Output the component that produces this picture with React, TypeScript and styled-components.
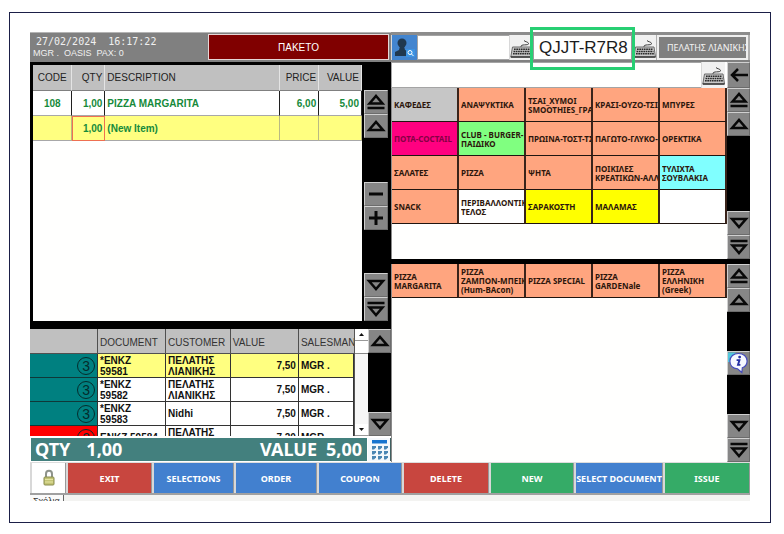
import React from "react";
import styled, { createGlobalStyle, css } from "styled-components";

const GlobalStyle = createGlobalStyle`
  *, *::before, *::after { box-sizing: border-box; }
  body { margin: 0; background: #ffffff; font-family: "Liberation Sans", Arial, sans-serif; }
  button, input { font: inherit; color: inherit; margin: 0; padding: 0; border: 0; border-radius: 0; }
  button { cursor: pointer; }
  table { border-collapse: separate; border-spacing: 0; table-layout: fixed; width: 100%; }
  th { font-weight: 400; }
`;

const uiFont = css`font-family: "Noto Sans", Tahoma, sans-serif;`;

const Page = styled.div`
  padding: 12px 13px 12px 9px;
`;

const Frame = styled.div`
  border: 1px solid #1b1f47;
  padding: 19px 20px 21px;
`;

const Terminal = styled.main`
  width: 100%;
`;

const Columns = styled.div`
  display: grid;
  grid-template-columns: minmax(0, 361fr) minmax(0, 359fr);
  height: 430px;
`;

const Column = styled.section`
  display: flex;
  flex-direction: column;
  min-width: 0;
`;

const StatusBar = styled.header`
  display: grid;
  grid-template-columns: minmax(0, 175fr) minmax(0, 181fr);
  height: 30px;
  background: #808080;
  border-top: 1px solid #b4b4b4;
  padding: 1px 2px 2px 3px;
`;

const Session = styled.div`
  display: flex;
  flex-direction: column;
  color: #f0f0f0;
  padding-top: 2px;
  white-space: pre;
`;

const Clock = styled.time`
  font: 10px/12px "DejaVu Sans Mono", monospace;
  padding-left: 3px;
`;

const Operator = styled.span`
  font-size: 9px;
  line-height: 10px;
`;

const OrderType = styled.button`
  background: #800000;
  border: 1px solid #e6d6d6;
  color: #ffffff;
  font-size: 10px;
`;

const OrderPanel = styled.div`
  display: grid;
  grid-template-columns: minmax(0, 1fr) 24px;
  column-gap: 2px;
  height: 267px;
  background: #000000;
  padding: 3px 3px 8px;
`;

const TableWell = styled.div`
  background: #fffffe;
  overflow: hidden;
`;

const OrderHead = styled.th<{ $align?: string }>`
  height: 26px;
  padding: 0 2px;
  background: #c0c0c0;
  border-right: 1px solid #e4e4e4;
  border-bottom: 1px solid #808080;
  color: #222222;
  font-size: 10px;
  text-align: ${(p) => p.$align || "left"};
  white-space: nowrap;
`;

const OrderCell = styled.td<{ $align?: string; $current?: boolean; $focus?: boolean }>`
  height: 25px;
  padding: 0 2px;
  color: #168a3b;
  font-size: 10px;
  font-weight: 700;
  text-align: ${(p) => p.$align || "left"};
  white-space: nowrap;
  background: ${(p) => (p.$current ? "#ffff80" : "#ffffff")};
  border-right: 1px solid ${(p) => (p.$current ? "#b9b983" : "#202020")};
  border-bottom: 1px solid #a8a8a8;
  ${(p) => p.$focus && css`border: 1px solid #ee7052;`}
`;

const Rail = styled.nav<{ $push?: number }>`
  display: flex;
  flex-direction: column;
  background: #000000;
  padding-top: ${(p) => p.$push || 0}px;
`;

const Spacer = styled.div`
  flex: 1;
`;

const RailButton = styled.button<{ $tall?: boolean }>`
  display: flex;
  align-items: center;
  justify-content: center;
  height: ${(p) => (p.$tall ? 26 : 24)}px;
  flex: none;
  background: #868686;
  border: 1px solid #6c6c6c;
  border-top-color: #d0d0d0;
  border-left-color: #d0d0d0;
`;

const Documents = styled.div`
  display: grid;
  grid-template-columns: minmax(0, 1fr) 14px 23px;
  height: 107px;
  overflow: hidden;
`;

const DocViewport = styled.div`
  height: 107px;
  overflow: hidden;
  background: #ffffff;
`;

const DocHead = styled.th`
  height: 25px;
  padding: 2px 0 0 2px;
  background: #c0c0c0;
  border-right: 1px solid #505050;
  border-bottom: 1px solid #505050;
  color: #333333;
  font-size: 10px;
  text-align: left;
  white-space: nowrap;
  overflow: hidden;
  &:last-child { border-right: 0; }
`;

const DocCell = styled.td<{ $current?: boolean; $right?: boolean }>`
  height: 24px;
  padding: 0 2px;
  background: ${(p) => (p.$current ? "#ffff80" : "#ffffff")};
  border-right: 1px solid #333333;
  border-bottom: 1px solid #333333;
  color: #111111;
  font-size: 10px;
  font-weight: 700;
  line-height: 11px;
  white-space: pre-line;
  text-align: ${(p) => (p.$right ? "right" : "left")};
`;

const StateCell = styled.td<{ $alert?: boolean }>`
  height: 24px;
  padding: 0 2px 0 0;
  background: ${(p) => (p.$alert ? "#ff0000" : "#008080")};
  border-right: 1px solid #333333;
  border-bottom: 1px solid #0f3838;
`;

const Ring = styled.span`
  display: flex;
  align-items: center;
  justify-content: center;
  width: 18px;
  height: 18px;
  margin-left: auto;
  border: 1px solid #052c2c;
  border-radius: 50%;
  color: #052c2c;
  font-size: 14px;
  line-height: 16px;
`;

const ScrollTrack = styled.div`
  display: flex;
  flex-direction: column;
  background: #f7f7f7;
  border-left: 1px solid #555555;
`;

const ScrollButton = styled.button`
  display: flex;
  align-items: center;
  justify-content: center;
  height: 12px;
  background: #ffffff;
  border-bottom: 1px solid #999999;
`;

const ScrollThumb = styled.div`
  height: 13px;
  background: #ffffff;
  border-bottom: 1px solid #888888;
`;

const Totals = styled.div`
  display: grid;
  grid-template-columns: minmax(0, 1fr) 23px;
  column-gap: 1px;
  height: 26px;
  padding: 2px 0 1px 1px;
  background: #ffffff;
`;

const TotalBar = styled.div`
  ${uiFont}
  display: flex;
  justify-content: space-between;
  align-items: center;
  padding: 0 5px 0 4px;
  background: #43807e;
  color: #ffffff;
  font-size: 18px;
  font-weight: 700;
  line-height: 23px;
`;

const TotalPair = styled.div<{ $gap: number }>`
  display: flex;
  gap: ${(p) => p.$gap}px;
`;

const CalcButton = styled.button`
  display: flex;
  align-items: center;
  justify-content: center;
  background: #f4f8fc;
  border-right: 1px solid #406060;
`;

const CustomerBar = styled.header`
  display: flex;
  height: 30px;
  background: #b0b0b0;
  border-top: 3px solid #8c8c8c;
  border-bottom: 2px solid #808080;
  padding: 0 2px 0 0;
`;

const IconButton = styled.button<{ $blue?: boolean }>`
  display: flex;
  align-items: center;
  justify-content: center;
  flex: none;
  width: ${(p) => (p.$blue ? 26 : 24)}px;
  background: ${(p) => (p.$blue ? "#4385cf" : "#f1f1f1")};
  border-left: 1px solid #d8d8d8;
`;

const TextField = styled.input`
  flex: 1;
  min-width: 0;
  width: 100%;
  background: #fffffe;
  border: 1px solid #a4a4a4;
  border-right: 0;
  outline: none;
  padding: 0 4px;
  font-size: 10px;
`;

const CodeHolder = styled.div`
  position: relative;
  flex: none;
  width: 99px;
  display: flex;
`;

const CodeField = styled(TextField)`
  border: 1px solid #9a9a9a;
  padding: 0 0 0 5px;
  font-size: 17px;
  color: #1c1c1c;
`;

const Highlight = styled.div`
  position: absolute;
  inset: -8px -3px -10px -3px;
  border: 3px solid #27cf73;
  pointer-events: none;
`;

const CustomerButton = styled.button`
  ${uiFont}
  flex: none;
  width: 91px;
  margin-left: 1px;
  background: #808080;
  border: 2px solid #efefef;
  padding-left: 8px;
  color: #f4f4f4;
  font-size: 9px;
  text-align: left;
  white-space: nowrap;
  overflow: hidden;
`;

const SearchRow = styled.div`
  display: grid;
  grid-template-columns: minmax(0, 1fr) 26px 23px;
  height: 26px;
`;

const Catalogue = styled.div<{ $height: number }>`
  display: grid;
  grid-template-columns: minmax(0, 1fr) 23px;
  height: ${(p) => p.$height}px;
  background: #fffffe;
`;

const CatalogueArea = styled.div`
  border-left: 1px solid #8a8a8a;
`;

const CellGrid = styled.div`
  display: grid;
  grid-template-columns: repeat(5, minmax(0, 1fr));
  grid-auto-rows: 34px;
`;

const Tile = styled.button<{ $bg: string; $ink?: string }>`
  font-family: "Noto Sans", Tahoma, sans-serif;
  background: ${(p) => p.$bg};
  color: ${(p) => p.$ink || "#2c160c"};
  border-right: 2px solid #3a241b;
  border-bottom: 1px solid #201510;
  padding: 0 0 0 2px;
  font-size: 8px;
  font-weight: 700;
  line-height: 9px;
  text-align: left;
`;

const TileLabel = styled.span`
  display: block;
  white-space: pre;
  overflow-x: clip;
  overflow-y: visible;
`;

const Divider = styled.div`
  height: 5px;
  background: #000000;
`;

const ActionBar = styled.footer`
  display: grid;
  grid-template-columns: 36fr 86fr 82fr 83fr 85fr 87fr 85fr 89fr 87fr;
  height: 33px;
  background: #b5b5b5;
  border-top: 1px solid #dddddd;
  border-bottom: 2px solid #a0a0a0;
`;

const Action = styled.button<{ $bg: string }>`
  ${uiFont}
  min-width: 0;
  display: flex;
  align-items: center;
  justify-content: center;
  background: ${(p) => p.$bg};
  border-left: 2px solid #d8d8d8;
  border-right: 1px solid #999999;
  color: #ffffff;
  font-size: 9px;
  font-weight: 700;
  white-space: nowrap;
`;

const TabStrip = styled.div`
  display: flex;
  align-items: flex-start;
  height: 6px;
  overflow: hidden;
  background: #f3f3f1;
`;

const Tab = styled.button`
  width: 34px;
  background: #fafafa;
  border-right: 1px solid #666666;
  font-size: 9px;
  line-height: 13px;
  text-align: left;
  padding-left: 3px;
  color: #333333;
`;

type ArrowKind = "up" | "top" | "down" | "bottom" | "minus" | "plus" | "back";

const arrowPaths: Record<ArrowKind, string> = {
  up: "M3 14 L10 6 L17 14 Z",
  top: "M3.5 11.5 L10 4 L16.5 11.5 Z M1.5 16 H18.5",
  down: "M3 6 L10 14 L17 6 Z",
  bottom: "M1.5 4 H18.5 M3.5 8.5 L10 16 L16.5 8.5 Z",
  minus: "M3 10 H17",
  plus: "M3 10 H17 M10 3 V17",
  back: "M19 10 H3 M9 4 L3 10 L9 16",
};

function Arrow({ kind }: { kind: ArrowKind }) {
  return (
    <svg width="20" height="20" viewBox="0 0 20 20" fill="none" stroke="#080808" strokeWidth={kind === "minus" || kind === "plus" ? 3 : 2.5} aria-hidden="true">
      <path d={arrowPaths[kind]} />
    </svg>
  );
}

function RailKey({ kind, label, tall }: { kind: ArrowKind; label: string; tall?: boolean }) {
  return (
    <RailButton type="button" aria-label={label} $tall={tall}>
      <Arrow kind={kind} />
    </RailButton>
  );
}

function Keyboard() {
  return (
    <svg width="23" height="22" viewBox="0 0 23 22" fill="none" aria-hidden="true">
      <path d="M11 10 C10 6.5 19 9 18.5 6.5 C18 4.5 15 5 14 3.5" stroke="#3a3a3a" />
      <path d="M2.5 10 H21 L22.5 20 H0.8 Z" fill="#c9c9c9" stroke="#6a6a6a" />
      <path d="M4 12.2 H20 M3.5 14.5 H20.5 M3 16.8 H21" stroke="#2a2a2a" strokeWidth="1.5" strokeDasharray="1.7 0.6" />
      <path d="M0.8 20 H22.5" stroke="#333333" strokeWidth="1.4" />
    </svg>
  );
}

function Person() {
  return (
    <svg width="24" height="24" viewBox="0 0 24 24" aria-hidden="true">
      <circle cx="9" cy="7" r="4.5" fill="#20384f" />
      <path d="M7 10 H11 L12 14 L17 16 V20 H2 V16 L6 14 Z" fill="#20384f" />
      <rect x="13" y="13" width="9" height="8" fill="#3c93e2" />
      <circle cx="17" cy="16.5" r="2" fill="none" stroke="#ffffff" />
      <path d="M18.5 18 L20.5 20" stroke="#ffffff" />
    </svg>
  );
}

function Calculator() {
  const keys = [0, 1, 2].flatMap((r) => [0, 1, 2].map((c) => [3 + c * 6, 7 + r * 5]));
  return (
    <svg width="20" height="22" viewBox="0 0 20 22" aria-hidden="true">
      <rect x="3" y="1" width="15" height="3.5" fill="#1874cf" />
      {keys.map(([x, y]) => (
        <path key={`${x}-${y}`} d={`M${x} ${y} h4 v1.5 l-2 2 h-2 z`} fill="#4a86b4" />
      ))}
    </svg>
  );
}

function Padlock() {
  return (
    <svg width="14" height="18" viewBox="0 0 14 18" aria-hidden="true">
      <path d="M4 9 V5 C4 0.8 10 0.8 10 5 V9" fill="none" stroke="#8e938b" strokeWidth="2" />
      <rect x="2" y="8" width="10" height="8" rx="1" fill="#c3c475" stroke="#888b4e" />
      <path d="M3 10.5 H11 M3 13 H11" stroke="#e5e4a3" />
    </svg>
  );
}

function InfoBubble() {
  return (
    <svg width="22" height="22" viewBox="0 0 22 22" aria-hidden="true">
      <rect width="8" height="10" fill="#52c8dc" />
      <path d="M11 1 C16 1 20 4 20 9 C20 13 18 15 15 16 L14.5 21 L10 17 C5 17 2 14 2 9 C2 4 6 1 11 1 Z" fill="#f6f8ff" stroke="#4349bd" strokeWidth="1.2" />
      <circle cx="12.2" cy="4.8" r="1.5" fill="#2630a5" />
      <path d="M9 8 H12 L10.5 13 H13" fill="none" stroke="#2630a5" strokeWidth="2" />
    </svg>
  );
}

function TinyArrow({ down }: { down?: boolean }) {
  return (
    <svg width="5" height="3" viewBox="0 0 5 3" aria-hidden="true">
      <path d={down ? "M0 0 H5 L2.5 3 Z" : "M0 3 H5 L2.5 0 Z"} fill="#111111" />
    </svg>
  );
}

const SALMON = "#ffa57f";
const PINK = "#ff0080";
const GREEN = "#80ff80";
const CYAN = "#80ffff";
const YELLOW = "#ffff00";

const categories: { text: string; bg?: string; ink?: string }[] = [
  { text: "ΚΑΦΕΔΕΣ", bg: "#c6c6c6" },
  { text: "ΑΝΑΨΥΚΤΙΚΑ" },
  { text: "ΤΣΑΙ_ΧΥΜΟΙ\nSMOOTHIES_ΓΡΑ" },
  { text: "ΚΡΑΣΙ-ΟΥΖΟ-ΤΣΙ" },
  { text: "ΜΠΥΡΕΣ" },
  { text: "ΠΟΤΑ-COCTAIL", bg: PINK, ink: "#850044" },
  { text: "CLUB - BURGER-\nΠΑΙΔΙΚΟ", bg: GREEN },
  { text: "ΠΡΩΙΝΑ-ΤΟΣΤ-ΤΣ" },
  { text: "ΠΑΓΩΤΟ-ΓΛΥΚΟ-" },
  { text: "ΟΡΕΚΤΙΚΑ" },
  { text: "ΣΑΛΑΤΕΣ" },
  { text: "PIZZA" },
  { text: "ΨΗΤΑ" },
  { text: "ΠΟΙΚΙΛΕΣ\nΚΡΕΑΤΙΚΩΝ-ΑΛΛ" },
  { text: "ΤΥΛΙΧΤΑ\nΣΟΥΒΛΑΚΙΑ", bg: CYAN },
  { text: "SNACK" },
  { text: "ΠΕΡΙΒΑΛΛΟΝΤΙΚ\nΤΕΛΟΣ", bg: "#ffffff" },
  { text: "ΣΑΡΑΚΟΣΤΗ", bg: YELLOW },
  { text: "ΜΑΛΑΜΑΣ", bg: YELLOW },
  { text: "", bg: "#ffffff" },
];

const items = ["PIZZA\nMARGARITA", "PIZZA\nΖΑΜΠΟΝ-ΜΠΕΙΚΟ\n(Hum-BAcon)", "PIZZA SPECIAL", "PIZZA\nGARDENale", "PIZZA\nΕΛΛΗΝΙΚΗ\n(Greek)"];

const documents = [
  { state: "3", doc: "*ENKZ\n59581", customer: "ΠΕΛΑΤΗΣ\nΛΙΑΝΙΚΗΣ", value: "7,50" },
  { state: "3", doc: "*ENKZ\n59582", customer: "ΠΕΛΑΤΗΣ\nΛΙΑΝΙΚΗΣ", value: "7,50" },
  { state: "3", doc: "*ENKZ\n59583", customer: "Nidhi", value: "7,50" },
  { state: "2", doc: "ENKZ 59584", customer: "ΠΕΛΑΤΗΣ\nΛΙΑΝΙΚΗΣ", value: "7,20", alert: true },
];

const RED = "#c8463f";
const BLUE = "#4280cf";
const LEAF = "#35ab67";

const actions = [
  { label: "EXIT", bg: RED },
  { label: "SELECTIONS", bg: BLUE },
  { label: "ORDER", bg: BLUE },
  { label: "COUPON", bg: BLUE },
  { label: "DELETE", bg: RED },
  { label: "NEW", bg: LEAF },
  { label: "SELECT DOCUMENT", bg: BLUE },
  { label: "ISSUE", bg: LEAF },
];

function OrderTable() {
  return (
    <TableWell>
      <table aria-label="Current order">
        <colgroup>
          <col width="12%" />
          <col width="10%" />
          <col />
          <col width="12%" />
          <col width="13%" />
        </colgroup>
        <thead>
          <tr>
            <OrderHead $align="center">CODE</OrderHead>
            <OrderHead $align="right">QTY</OrderHead>
            <OrderHead>DESCRIPTION</OrderHead>
            <OrderHead $align="right">PRICE</OrderHead>
            <OrderHead $align="right">VALUE</OrderHead>
          </tr>
        </thead>
        <tbody>
          <tr>
            <OrderCell $align="center">108</OrderCell>
            <OrderCell $align="right">1,00</OrderCell>
            <OrderCell>PIZZA MARGARITA</OrderCell>
            <OrderCell $align="right">6,00</OrderCell>
            <OrderCell $align="right">5,00</OrderCell>
          </tr>
          <tr>
            <OrderCell $current />
            <OrderCell $current $focus $align="right">1,00</OrderCell>
            <OrderCell $current>(New Item)</OrderCell>
            <OrderCell $current />
            <OrderCell $current />
          </tr>
        </tbody>
      </table>
    </TableWell>
  );
}

function DocumentTable() {
  return (
    <DocViewport>
      <table aria-label="Documents">
        <colgroup>
          <col width="21%" />
          <col width="21%" />
          <col width="20%" />
          <col width="21%" />
          <col />
        </colgroup>
        <thead>
          <tr>
            <DocHead aria-label="State" />
            <DocHead>DOCUMENT</DocHead>
            <DocHead>CUSTOMER</DocHead>
            <DocHead>VALUE</DocHead>
            <DocHead>SALESMAN</DocHead>
          </tr>
        </thead>
        <tbody>
          {documents.map((d, i) => (
            <tr key={d.doc}>
              <StateCell $alert={d.alert}><Ring>{d.state}</Ring></StateCell>
              <DocCell $current={i === 0}>{d.doc}</DocCell>
              <DocCell $current={i === 0}>{d.customer}</DocCell>
              <DocCell $current={i === 0} $right>{d.value}</DocCell>
              <DocCell $current={i === 0}>MGR .</DocCell>
            </tr>
          ))}
        </tbody>
      </table>
    </DocViewport>
  );
}

export default function App() {
  return (
    <Page>
      <GlobalStyle />
      <Frame>
        <Terminal>
          <Columns>
            <Column>
              <StatusBar>
                <Session>
                  <Clock>27/02/2024  16:17:22</Clock>
                  <Operator>MGR .  OASIS  PAX: 0</Operator>
                </Session>
                <OrderType type="button">ΠΑΚΕΤΟ</OrderType>
              </StatusBar>
              <OrderPanel>
                <OrderTable />
                <Rail $push={25}>
                  <RailKey kind="top" label="First line" />
                  <RailKey kind="up" label="Previous line" />
                  <Spacer />
                  <RailKey kind="minus" label="Decrease" />
                  <RailKey kind="plus" label="Increase" />
                  <Spacer />
                  <RailKey kind="down" label="Next line" />
                  <RailKey kind="bottom" label="Last line" />
                </Rail>
              </OrderPanel>
              <Documents>
                <DocumentTable />
                <ScrollTrack>
                  <ScrollButton type="button" aria-label="Scroll up"><TinyArrow /></ScrollButton>
                  <ScrollThumb />
                  <Spacer />
                  <ScrollButton type="button" aria-label="Scroll down"><TinyArrow down /></ScrollButton>
                </ScrollTrack>
                <Rail>
                  <RailKey kind="up" label="Previous document" />
                  <Spacer />
                  <RailKey kind="down" label="Next document" />
                </Rail>
              </Documents>
              <Totals>
                <TotalBar>
                  <TotalPair $gap={16}><span>QTY</span><span>1,00</span></TotalPair>
                  <TotalPair $gap={9}><span>VALUE</span><span>5,00</span></TotalPair>
                </TotalBar>
                <CalcButton type="button" aria-label="Calculator"><Calculator /></CalcButton>
              </Totals>
            </Column>
            <Column>
              <CustomerBar>
                <IconButton type="button" aria-label="Find customer" $blue><Person /></IconButton>
                <TextField aria-label="Customer" />
                <IconButton type="button" aria-label="Customer keyboard"><Keyboard /></IconButton>
                <CodeHolder>
                  <CodeField aria-label="Code" defaultValue="QJJT-R7R8" />
                  <Highlight />
                </CodeHolder>
                <IconButton type="button" aria-label="Code keyboard"><Keyboard /></IconButton>
                <CustomerButton type="button">ΠΕΛΑΤΗΣ ΛΙΑΝΙΚΗΣ</CustomerButton>
              </CustomerBar>
              <SearchRow>
                <TextField aria-label="Search items" />
                <IconButton type="button" aria-label="Search keyboard"><Keyboard /></IconButton>
                <RailKey kind="back" label="Back" tall />
              </SearchRow>
              <Catalogue $height={171}>
                <CatalogueArea>
                  <CellGrid>
                    {categories.map((c, i) => (
                      <Tile key={i} type="button" $bg={c.bg || SALMON} $ink={c.ink} aria-label={c.text ? undefined : "Empty category"}>
                        <TileLabel>{c.text}</TileLabel>
                      </Tile>
                    ))}
                  </CellGrid>
                </CatalogueArea>
                <Rail>
                  <RailKey kind="top" label="First categories" />
                  <RailKey kind="up" label="Previous categories" />
                  <Spacer />
                  <RailKey kind="down" label="Next categories" />
                  <RailKey kind="bottom" label="Last categories" />
                </Rail>
              </Catalogue>
              <Divider />
              <Catalogue $height={198}>
                <CatalogueArea>
                  <CellGrid>
                    {items.map((text) => (
                      <Tile key={text} type="button" $bg={SALMON}>
                        <TileLabel>{text}</TileLabel>
                      </Tile>
                    ))}
                  </CellGrid>
                </CatalogueArea>
                <Rail>
                  <RailKey kind="top" label="First items" />
                  <RailKey kind="up" label="Previous items" />
                  <Spacer />
                  <RailButton type="button" aria-label="Information"><InfoBubble /></RailButton>
                  <Spacer />
                  <RailKey kind="down" label="Next items" />
                  <RailKey kind="bottom" label="Last items" />
                </Rail>
              </Catalogue>
            </Column>
          </Columns>
          <ActionBar>
            <Action type="button" $bg="#ffffff" aria-label="Lock"><Padlock /></Action>
            {actions.map((a) => (
              <Action key={a.label} type="button" $bg={a.bg}>{a.label}</Action>
            ))}
          </ActionBar>
          <TabStrip>
            <Tab type="button">Σχόλια</Tab>
          </TabStrip>
        </Terminal>
      </Frame>
    </Page>
  );
}
